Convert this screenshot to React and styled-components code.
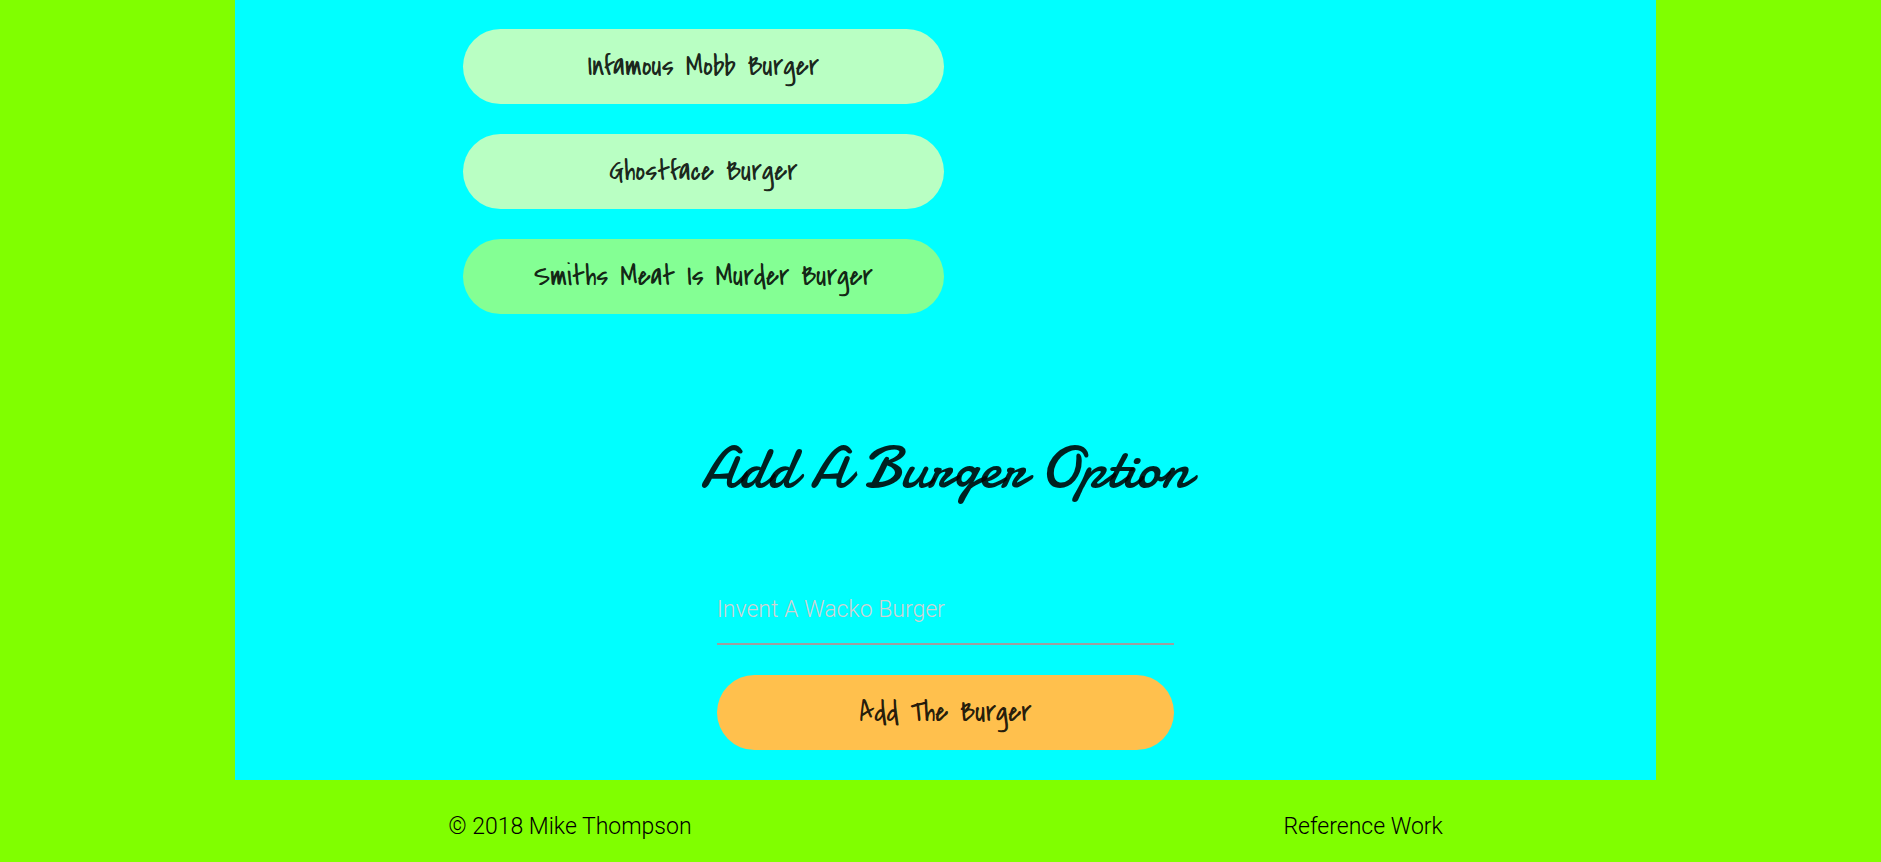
import React from "react";
import styled, { createGlobalStyle } from "styled-components";

const GlobalStyle = createGlobalStyle`
  *, *::before, *::after { box-sizing: border-box; }
  body {
    margin: 0;
    background: #80ff00;
    color: rgba(0, 0, 0, 0.87);
    font-family: Roboto, sans-serif;
    font-size: 23px;
    font-weight: 300;
    line-height: 34px;
  }
`;

const hand = `"Covered By Your Grace", Lato, sans-serif`;
const script = `"Damion", Lato, sans-serif`;

const Page = styled.div`
  margin: 0 225px 0 235px;
`;

const Panel = styled.main`
  background: #00ffff;
  padding: 29px 0 30px;
`;

const Container = styled.div`
  width: 70%;
  margin: 0 auto;
`;

const BurgerList = styled.ul`
  list-style: none;
  margin: 0;
  padding: 0 0 0 15px;
  width: calc(50% - 2px);
  display: flex;
  flex-direction: column;
  gap: 30px;
`;

const tones = { pale: "#b9ffc3", green: "#84ff94", orange: "#ffc04d" };

const PillButton = styled.button`
  display: block;
  width: 100%;
  height: 75px;
  padding: 0 30px 2px;
  border: 0;
  border-radius: 38px;
  background: ${({ $tone }) => tones[$tone]};
  color: rgba(0, 0, 0, 0.87);
  font: 400 30px/36px ${hand};
  text-align: center;
  white-space: nowrap;
  cursor: pointer;
`;

const Title = styled.h2`
  margin: 109px 0 72px;
  color: rgba(0, 0, 0, 0.87);
  font: 400 60px/90px ${script};
  text-align: center;
  white-space: nowrap;
`;

const Form = styled.form`
  width: 46%;
  margin: 0 auto;
  display: flex;
  flex-direction: column;
  gap: 30px;
`;

const TextField = styled.input`
  width: 100%;
  height: 60px;
  padding: 0 0 10px;
  border: 0;
  border-bottom: 2px solid #9e9e9e;
  border-radius: 0;
  outline: none;
  background: transparent;
  color: rgba(0, 0, 0, 0.87);
  font: 300 23px/34px Roboto, sans-serif;

  &::placeholder {
    color: #d1d1d1;
    opacity: 1;
  }
`;

const Footer = styled.footer`
  padding: 30px 0 18px;
  color: #000;
`;

const FooterRow = styled(Container)`
  display: flex;
  justify-content: space-between;
`;

const FooterLink = styled.a`
  color: inherit;
  text-decoration: none;
`;

const burgers = [
  { name: "Infamous Mobb Burger", tone: "pale" },
  { name: "Ghostface Burger", tone: "pale" },
  { name: "Smiths Meat Is Murder Burger", tone: "green" },
];

export default function App() {
  return (
    <Page>
      <GlobalStyle />
      <Panel>
        <Container>
          <BurgerList>
            {burgers.map(({ name, tone }) => (
              <li key={name}>
                <PillButton type="button" $tone={tone}>{name}</PillButton>
              </li>
            ))}
          </BurgerList>
          <Title>Add A Burger Option</Title>
          <Form onSubmit={(event) => event.preventDefault()}>
            <TextField
              type="text"
              name="burger"
              aria-label="Invent A Wacko Burger"
              placeholder="Invent A Wacko Burger"
            />
            <PillButton type="submit" $tone="orange">Add The Burger</PillButton>
          </Form>
        </Container>
      </Panel>
      <Footer>
        <FooterRow>
          <span>© 2018 Mike Thompson</span>
          <FooterLink href="#reference">Reference Work</FooterLink>
        </FooterRow>
      </Footer>
    </Page>
  );
}
